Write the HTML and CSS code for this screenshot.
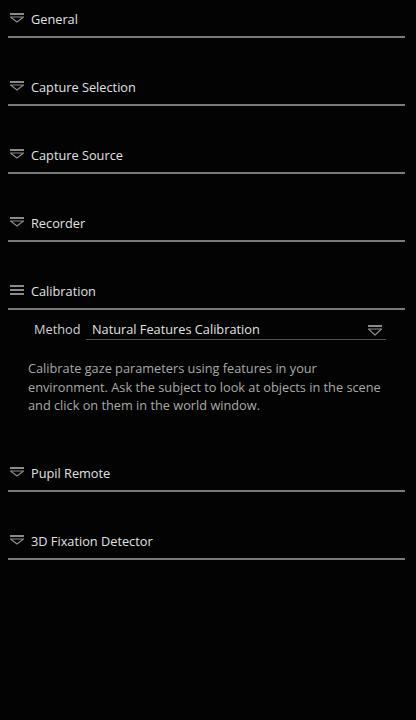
FILE: index.html
```html
<!DOCTYPE html>
<html>
<head>
<meta charset="utf-8">
<link rel="stylesheet" href="styles.css">
</head>
<body>
<div class="panel">
  <div class="section">
    <div class="header">
      <svg class="icon" width="14" height="10" viewBox="0 0 14 10"><rect x="0" y="0" width="14" height="2" fill="#8a8a8a"/><path d="M0.5 4 L13.5 4 L7 9 Z" fill="none" stroke="#8a8a8a" stroke-width="1.2" stroke-linejoin="round"/></svg>
      <span class="title">General</span>
    </div>
  </div>
  <div class="section">
    <div class="header">
      <svg class="icon" width="14" height="10" viewBox="0 0 14 10"><rect x="0" y="0" width="14" height="2" fill="#8a8a8a"/><path d="M0.5 4 L13.5 4 L7 9 Z" fill="none" stroke="#8a8a8a" stroke-width="1.2" stroke-linejoin="round"/></svg>
      <span class="title">Capture Selection</span>
    </div>
  </div>
  <div class="section">
    <div class="header">
      <svg class="icon" width="14" height="10" viewBox="0 0 14 10"><rect x="0" y="0" width="14" height="2" fill="#8a8a8a"/><path d="M0.5 4 L13.5 4 L7 9 Z" fill="none" stroke="#8a8a8a" stroke-width="1.2" stroke-linejoin="round"/></svg>
      <span class="title">Capture Source</span>
    </div>
  </div>
  <div class="section">
    <div class="header">
      <svg class="icon" width="14" height="10" viewBox="0 0 14 10"><rect x="0" y="0" width="14" height="2" fill="#8a8a8a"/><path d="M0.5 4 L13.5 4 L7 9 Z" fill="none" stroke="#8a8a8a" stroke-width="1.2" stroke-linejoin="round"/></svg>
      <span class="title">Recorder</span>
    </div>
  </div>
  <div class="section open">
    <div class="header">
      <svg class="icon" width="14" height="10" viewBox="0 0 14 10"><rect x="0" y="0" width="14" height="2" fill="#8a8a8a"/><rect x="0" y="4" width="14" height="2" fill="#8a8a8a"/><rect x="0" y="8" width="14" height="2" fill="#8a8a8a"/></svg>
      <span class="title">Calibration</span>
    </div>
    <div class="content">
      <div class="row">
        <span class="label">Method</span>
        <div class="select">
          <span class="value">Natural Features Calibration</span>
          <svg class="select-icon" width="14" height="11" viewBox="0 0 14 11"><rect x="0" y="0" width="14" height="2" fill="#8a8a8a"/><path d="M0.5 4 L13.5 4 L7 10 Z" fill="none" stroke="#8a8a8a" stroke-width="1.2" stroke-linejoin="round"/></svg>
        </div>
      </div>
      <p class="desc">Calibrate gaze parameters using features in your environment. Ask the subject to look at objects in the scene and click on them in the world window.</p>
    </div>
  </div>
  <div class="section">
    <div class="header">
      <svg class="icon" width="14" height="10" viewBox="0 0 14 10"><rect x="0" y="0" width="14" height="2" fill="#8a8a8a"/><path d="M0.5 4 L13.5 4 L7 9 Z" fill="none" stroke="#8a8a8a" stroke-width="1.2" stroke-linejoin="round"/></svg>
      <span class="title">Pupil Remote</span>
    </div>
  </div>
  <div class="section">
    <div class="header">
      <svg class="icon" width="14" height="10" viewBox="0 0 14 10"><rect x="0" y="0" width="14" height="2" fill="#8a8a8a"/><path d="M0.5 4 L13.5 4 L7 9 Z" fill="none" stroke="#8a8a8a" stroke-width="1.2" stroke-linejoin="round"/></svg>
      <span class="title">3D Fixation Detector</span>
    </div>
  </div>
</div>
</body>
</html>
```
FILE: styles.css
```css
html, body {
  margin: 0;
  padding: 0;
  background: #030303;
  height: 100%;
}
body {
  font-family: "Open Sans", "Noto Sans", sans-serif;
  font-size: 12.75px;
  color: #e2e2e2;
}
.panel {
  display: flex;
  flex-direction: column;
  padding-left: 8px;
  width: 397px;
}
.section {
  display: flex;
  flex-direction: column;
  margin-bottom: 30px;
}
.section.open {
  margin-bottom: 0;
}
.header {
  height: 36px;
  display: flex;
  align-items: center;
  border-bottom: 2px solid #7a7a7a;
}
.icon {
  margin-left: 2px;
  margin-right: 7px;
  flex: none;
}
.title {
  line-height: 18px;
  padding-top: 2px;
}
.content {
  display: flex;
  flex-direction: column;
}
.row {
  display: flex;
  align-items: flex-end;
  height: 30px;
  padding-left: 26px;
}
.label {
  width: 52px;
  color: #d0d0d0;
  line-height: 18px;
  padding-bottom: 2px;
}
.select {
  width: 300px;
  height: 30px;
  display: flex;
  align-items: flex-end;
  justify-content: space-between;
  border-bottom: 1px solid #505050;
  box-sizing: border-box;
  padding-left: 6px;
  padding-right: 4px;
}
.value {
  color: #e2e2e2;
  line-height: 18px;
  padding-bottom: 1px;
}
.select-icon {
  flex: none;
  margin-bottom: 3px;
}
.desc {
  margin: 19px 0 39.5px 0;
  padding-left: 20px;
  padding-right: 10px;
  color: #a9a9a9;
  line-height: 18.5px;
}
```
